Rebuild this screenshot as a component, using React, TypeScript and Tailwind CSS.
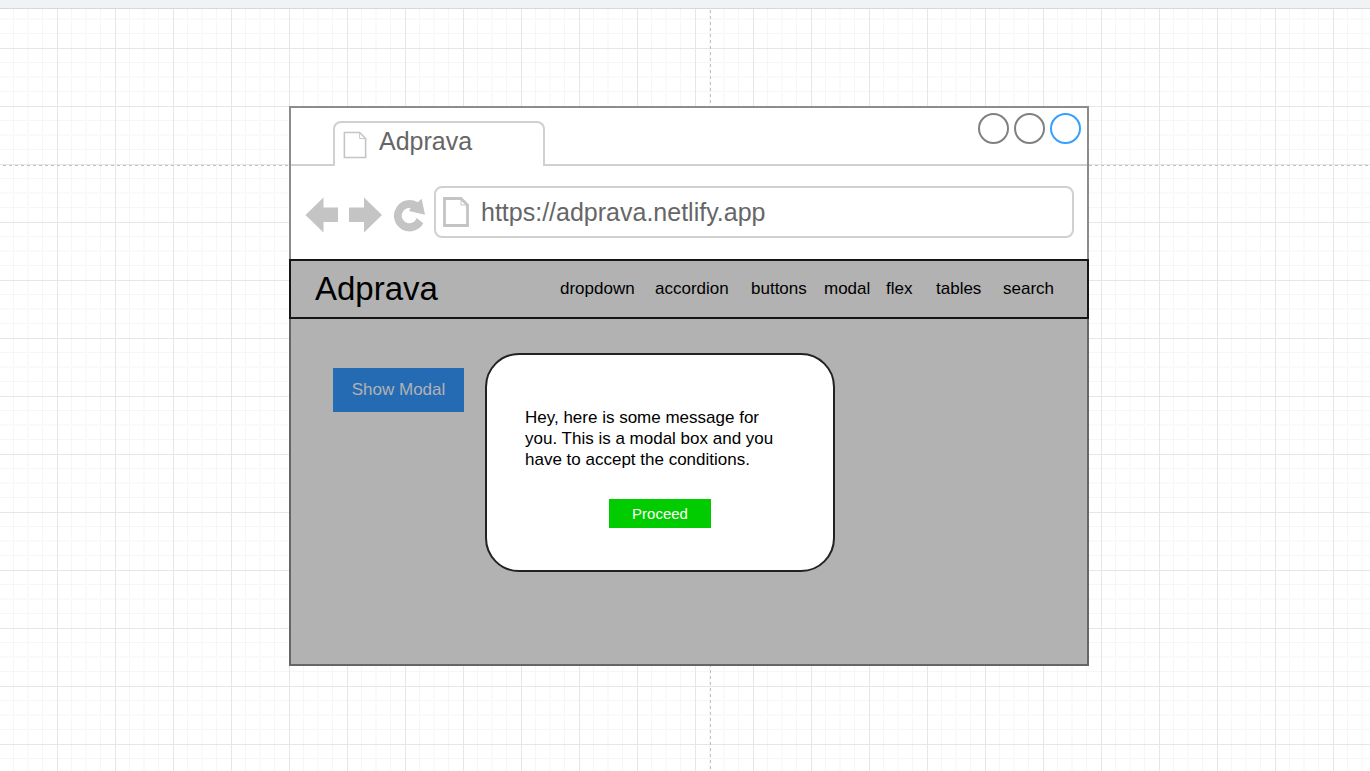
import React from "react";

const links = ["dropdown", "accordion", "buttons", "modal", "flex", "tables", "search"];

function CanvasGrid() {
  return (
    <svg className="absolute inset-0 h-full w-full" aria-hidden="true">
      <defs>
        <pattern id="grid" x="57" y="39" width="58" height="58" patternUnits="userSpaceOnUse">
          <path d="M14.5 0V58M43.5 0V58M0 14.5H58M0 43.5H58" stroke="#f6f6f6" fill="none" />
          <path d="M29 0V58M0 29H58" stroke="#fafafa" strokeWidth="2" fill="none" />
          <path d="M0.5 0V58M0 0.5H58" stroke="#e6e6e6" fill="none" />
        </pattern>
      </defs>
      <rect width="100%" height="100%" fill="url(#grid)" />
      <line x1="0" y1="156.5" x2="100%" y2="156.5" stroke="#c0c0c0" strokeDasharray="3 3" strokeDashoffset="3" />
      <line x1="710.5" y1="1" x2="710.5" y2="100%" stroke="#c0c0c0" strokeDasharray="3 3" />
    </svg>
  );
}

function PageIcon({ bold = false }: { bold?: boolean }) {
  return (
    <svg
      width={bold ? 26 : 24}
      height={bold ? 30 : 28}
      viewBox="0 0 26 30"
      fill="none"
      stroke="#c4c4c4"
      className="block shrink-0"
      aria-hidden="true"
    >
      <path d="M1.5 1.5H18L24.5 8V28.5H1.5Z" strokeWidth={bold ? 2.8 : 1.7} />
      <path d="M18 1.5V8H24.5" strokeWidth="1" />
    </svg>
  );
}

function TitleBar() {
  return (
    <div className="flex h-[58px] items-end">
      <div className="w-[42px] border-b-2 border-[#d0d0d0]" />
      <div className="flex h-[45px] w-[212px] items-start gap-3 rounded-t-lg border-2 border-b-0 border-[#d0d0d0] pl-2 pt-[2px] text-[25px] leading-8 text-[#666]">
        <span className="pt-[6px]"><PageIcon /></span>
        <span>Adprava</span>
      </div>
      <div className="flex h-full flex-1 justify-end gap-[5px] border-b-2 border-[#d0d0d0] pr-[6px] pt-[5px]">
        <button aria-label="Minimize" className="size-[31px] rounded-full border-2 border-[#808080]" />
        <button aria-label="Maximize" className="size-[31px] rounded-full border-2 border-[#808080]" />
        <button aria-label="Close" className="size-[31px] rounded-full border-2 border-[#379fff]" />
      </div>
    </div>
  );
}

function Toolbar() {
  return (
    <div className="flex h-[93px] items-center pb-[1px] pl-[14px] pr-[13px]">
      <div className="flex items-center gap-[11px] pt-[6px]">
        <button aria-label="Back">
          <svg width="33" height="36" viewBox="0 0 33 36" fill="#c4c4c4" className="block"><path d="M0.500 18L18.500 0.500V10.500H33V25H18.500V35.500Z" /></svg>
        </button>
        <button aria-label="Forward">
          <svg width="33" height="36" viewBox="0 0 33 36" fill="#c4c4c4" className="block"><path d="M33 18L15 0.500V10.500H0V25H15V35.500Z" /></svg>
        </button>
        <button aria-label="Reload">
          <svg width="33" height="36" viewBox="339 305 99 108" fill="#c4c4c4" className="block">
            <path d="M413 321A47 47 0 1 0 430 384L410 368A23 23 0 1 1 392 338L387 347L435 358L425 310Z" />
          </svg>
        </button>
      </div>
      <label className="ml-2 flex h-[52px] min-w-0 flex-1 items-center gap-3 rounded-lg border-2 border-[#d0d0d0] pl-[7px]">
        <PageIcon bold />
        <input aria-label="Address" defaultValue="https://adprava.netlify.app" className="min-w-0 flex-1 bg-transparent text-[25px] leading-8 text-[#666] outline-none" />
      </label>
    </div>
  );
}

export default function App() {
  return (
    <div className="flex min-h-screen flex-col bg-white font-['Liberation_Sans',Arial,sans-serif]">
      <div className="h-[9px] border-b border-[#d8d8d8] bg-[#f0f2f4]" />
      <main className="relative flex flex-1 items-start justify-center pb-[104px] pl-2 pt-[97px]">
        <CanvasGrid />
        <section className="relative w-full max-w-[800px]">
          <div className="border-2 border-b-0 border-[#8c8c8c] bg-white">
            <TitleBar />
            <Toolbar />
          </div>
          <header className="flex h-[60px] items-center justify-between border-2 border-[#151515] bg-[#b2b2b2] pl-6 pr-7 text-black">
            <h1 className="text-[33px] leading-10">Adprava</h1>
            <nav className="grid grid-cols-[95px_96px_73px_62px_50px_67px_56px] text-[17px] leading-5">
              {links.map((link) => (
                <a key={link} href={"#" + link}>{link}</a>
              ))}
            </nav>
          </header>
          <div className="flex h-[347px] items-start gap-[21px] border-2 border-t-0 border-[#666] bg-[#b2b2b2] pl-[42px] pt-[34px]">
            <button className="mt-[15px] h-11 w-[131px] bg-[#256bb3] text-[17px] leading-5 text-[#b2b2b2]">Show Modal</button>
            <div role="dialog" aria-label="Message" className="flex h-[219px] w-[350px] flex-col items-center rounded-[34px] border-2 border-[#222] bg-white pl-[38px] pr-[38px] pt-[52px]">
              <p className="w-full pr-2 text-[17px] leading-[21px] text-black">
                Hey, here is some message for you. This is a modal box and you have to accept the conditions.
              </p>
              <button className="mt-[29px] h-[29px] w-[102px] bg-[#00cc00] text-[15px] leading-5 text-white">Proceed</button>
            </div>
          </div>
        </section>
      </main>
    </div>
  );
}
